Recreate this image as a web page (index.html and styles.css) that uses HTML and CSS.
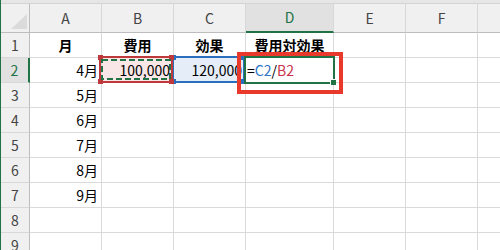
FILE: index.html
```html
<!DOCTYPE html>
<html lang="ja">
<head>
    <meta charset="UTF-8">
    <title>費用対効果</title>
    <link rel="stylesheet" href="styles.css">
</head>
<body>
    <div class="window">
        <div class="top-strip"></div>
        <div class="sheet">
            <!-- column headers -->
            <div class="cell corner"><span class="corner-mark"></span></div>
            <div class="cell col-head">A</div>
            <div class="cell col-head">B</div>
            <div class="cell col-head">C</div>
            <div class="cell col-head active">D</div>
            <div class="cell col-head">E</div>
            <div class="cell col-head">F</div>
            <div class="cell col-head"></div>

            <div class="cell row-head">1</div>
            <div class="cell title">月</div>
            <div class="cell title">費用</div>
            <div class="cell title">効果</div>
            <div class="cell title">費用対効果</div>
            <div class="cell"></div>
            <div class="cell"></div>
            <div class="cell"></div>

            <div class="cell row-head active">2</div>
            <div class="cell num">4月</div>
            <div class="cell num ref-b">100,000
                <span class="ref-box ref-box-b">
                    <i class="grip tl"></i><i class="grip tr"></i><i class="grip bl"></i><i class="grip br"></i>
                </span>
                <svg class="marquee" width="70" height="21" viewBox="0 0 70 21">
                    <rect x="1" y="1" width="68" height="19" fill="none" stroke="#217346" stroke-width="2" stroke-dasharray="6 3"/>
                </svg>
            </div>
            <div class="cell num ref-c">120,000
                <span class="ref-box ref-box-c">
                    <i class="grip tl"></i><i class="grip tr"></i><i class="grip bl"></i><i class="grip br"></i>
                </span>
            </div>
            <div class="cell formula">=<span class="txt-c">C2</span>/<span class="txt-b">B2</span>
                <span class="active-box"><i class="fill-handle"></i></span>
                <span class="callout"></span>
            </div>
            <div class="cell"></div>
            <div class="cell"></div>
            <div class="cell"></div>

            <div class="cell row-head">3</div>
            <div class="cell num">5月</div>
            <div class="cell"></div><div class="cell"></div><div class="cell"></div>
            <div class="cell"></div><div class="cell"></div><div class="cell"></div>

            <div class="cell row-head">4</div>
            <div class="cell num">6月</div>
            <div class="cell"></div><div class="cell"></div><div class="cell"></div>
            <div class="cell"></div><div class="cell"></div><div class="cell"></div>

            <div class="cell row-head">5</div>
            <div class="cell num">7月</div>
            <div class="cell"></div><div class="cell"></div><div class="cell"></div>
            <div class="cell"></div><div class="cell"></div><div class="cell"></div>

            <div class="cell row-head">6</div>
            <div class="cell num">8月</div>
            <div class="cell"></div><div class="cell"></div><div class="cell"></div>
            <div class="cell"></div><div class="cell"></div><div class="cell"></div>

            <div class="cell row-head">7</div>
            <div class="cell num">9月</div>
            <div class="cell"></div><div class="cell"></div><div class="cell"></div>
            <div class="cell"></div><div class="cell"></div><div class="cell"></div>

            <div class="cell row-head">8</div>
            <div class="cell"></div><div class="cell"></div><div class="cell"></div><div class="cell"></div>
            <div class="cell"></div><div class="cell"></div><div class="cell"></div>

            <div class="cell row-head">9</div>
            <div class="cell"></div><div class="cell"></div><div class="cell"></div><div class="cell"></div>
            <div class="cell"></div><div class="cell"></div><div class="cell"></div>
        </div>
    </div>
</body>
</html>
```

FILE: styles.css
```css
html, body{
    margin: 0;
    padding: 0;
}
body{
    width: 500px;
    height: 250px;
    overflow: hidden;
    background: #fff;
    font-family: "Noto Sans CJK JP", "Noto Sans", sans-serif;
    font-size: 14px;
    color: #000;
}
.window{
    height: 100%;
    border-left: 1px solid #217346;
}
.top-strip{
    height: 3px;
    background: #e6e6e6;
    border-bottom: 1px solid #d4d4d4;
}

.sheet{
    display: grid;
    grid-template-columns: 29px 72px 72px 72px 88px 72px 72px 72px;
    grid-template-rows: 29px;
    grid-auto-rows: 25px;
}
.cell{
    position: relative;
    box-sizing: border-box;
    border-right: 1px solid #dadada;
    border-bottom: 1px solid #dadada;
    padding: 0 3px;
    line-height: 24px;
    white-space: nowrap;
}

/* headers */
.corner{
    display: flex;
    justify-content: flex-end;
    align-items: flex-end;
    padding: 0 2px 3px 0;
    background: #f0f0f0;
    border-right-color: #bdbdbd;
    border-bottom-color: #bdbdbd;
}
.corner-mark{
    width: 16px;
    height: 15px;
    background: #dbdbdb;
    clip-path: polygon(100% 0, 100% 100%, 0 100%);
}
.col-head{
    background: #f0f0f0;
    color: #444;
    text-align: center;
    line-height: 28px;
    border-right-color: #d8d8d8;
    border-bottom-color: #bdbdbd;
}
.col-head.active{
    background: #e1e1e1;
    color: #217346;
    line-height: 27px;
    border-bottom: 2px solid #217346;
}
.row-head{
    padding: 0;
    background: #f0f0f0;
    color: #444;
    text-align: center;
    border-right-color: #bdbdbd;
    border-bottom-color: #d8d8d8;
}
.row-head.active{
    background: #e1e1e1;
    color: #217346;
    border-right: 2px solid #217346;
}

/* cell contents */
.title{
    font-weight: bold;
    text-align: center;
}
.num{
    text-align: right;
}
.formula{
    padding-left: 1px;
}
.txt-c{
    color: #2e75c6;
}
.txt-b{
    color: #c9344b;
}

/* formula references */
.ref-b{
    background: #f9e7e7;
}
.ref-c{
    background: #e4edf8;
}
.ref-box{
    position: absolute;
    box-sizing: border-box;
    top: -2px;
    height: 27px;
    border: 2px solid;
}
.ref-box-b{
    left: -3px;
    width: 74px;
    border-color: #bf383c;
    z-index: 2;
}
.ref-box-c{
    left: -2px;
    width: 73px;
    border-color: #2a6fbd;
    z-index: 1;
}
.grip{
    position: absolute;
    width: 5px;
    height: 5px;
}
.ref-box-b .grip{ background: #bf383c; }
.ref-box-c .grip{ background: #2a6fbd; }
.grip.tl{ left: -3px; top: -3px; }
.grip.tr{ right: -3px; top: -3px; }
.grip.bl{ left: -3px; bottom: -3px; }
.grip.br{ right: -3px; bottom: -3px; }

.marquee{
    position: absolute;
    left: -1px;
    top: 1px;
    z-index: 2;
}

/* active cell */
.active-box{
    position: absolute;
    box-sizing: border-box;
    left: -2px;
    top: -2px;
    width: 91px;
    height: 28px;
    border: 2px solid #217346;
    z-index: 3;
}
.fill-handle{
    position: absolute;
    right: -3px;
    bottom: -3px;
    width: 5px;
    height: 5px;
    background: #217346;
    box-shadow: -1px -1px 0 #fff;
}

.callout{
    position: absolute;
    box-sizing: border-box;
    left: -9px;
    top: -6px;
    width: 106px;
    height: 42px;
    border: 4px solid #e8392c;
    z-index: 4;
}
```
